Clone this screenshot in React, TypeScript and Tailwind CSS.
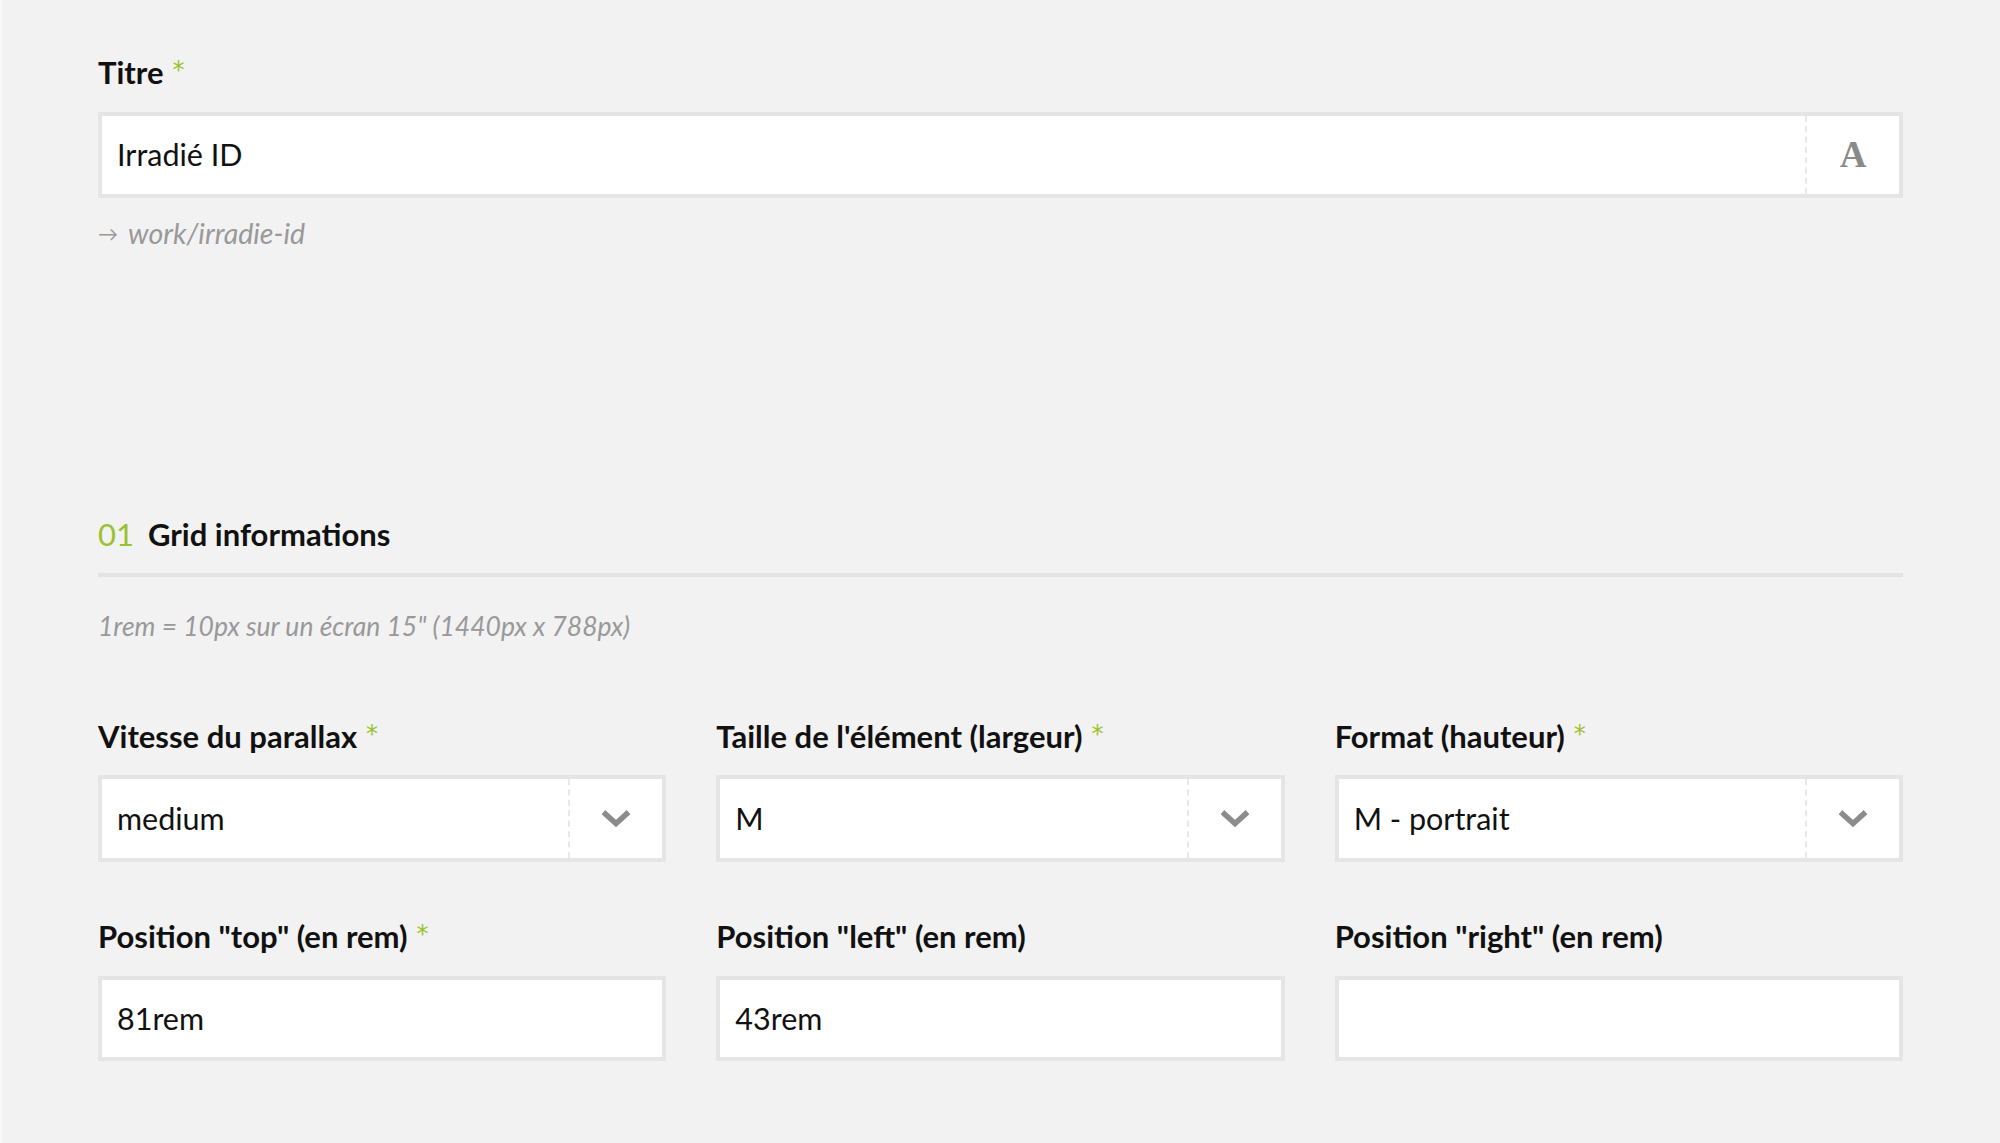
import { ReactNode } from 'react';

const FONT = "font-['Lato','Noto_Sans',sans-serif]";

// astérisque vert des champs obligatoires
function Required() {
  return (
    <span className="ml-[9px] self-start pt-[6px] font-['DejaVu_Sans',sans-serif] text-[24px] font-normal leading-none text-[#9bc12e]">
      *
    </span>
  );
}

function Label({ children, required }: { children: ReactNode; required?: boolean }) {
  return (
    <div className="flex h-[40px] items-center text-[31px] font-bold leading-[40px] text-[#111]">
      <span>{children}</span>
      {required && <Required />}
    </div>
  );
}

function Chevron() {
  return (
    <svg width="30" height="20" viewBox="0 0 30 20" fill="none">
      <polyline points="4.5,5 15,14.5 25.5,5" stroke="#8c8c8c" strokeWidth="5.5" strokeLinecap="square" />
    </svg>
  );
}

function Box({ children, addon, h }: { children?: ReactNode; addon?: ReactNode; h: string }) {
  return (
    <div className={'flex border-4 border-[#e5e5e5] bg-white ' + h}>
      <div className="flex flex-1 items-center pl-[15px] text-[30.5px] text-[#111]">{children}</div>
      {addon && (
        <div className="flex w-[94px] items-center justify-center border-l-2 border-dashed border-[#e8e8e8]">
          {addon}
        </div>
      )}
    </div>
  );
}

export default function App() {
  return (
    <div className={'min-h-[1143px] border-l-2 border-[#f8f8f8] bg-[#f2f2f2] pb-[80px] pl-[96px] pr-[97px] pt-[52px] ' + FONT}>
      {/* Titre */}
      <Label required>Titre</Label>
      <div className="mt-[20px]">
        <Box
          h="h-[86px]"
          addon={<span className="font-['Liberation_Serif',serif] text-[37px] font-bold text-[#8a8a8a]">A</span>}
        >
          Irradié ID
        </Box>
      </div>
      <div className="mt-[17px] flex h-[36px] items-center text-[28.5px] italic text-[#999]">
        <span className="mr-[10px] not-italic text-[20px] text-[#999]">→</span>
        work/irradie-id
      </div>

      {/* Section 01 */}
      <div className="mt-[263px] flex h-[40px] items-center text-[31px] leading-[40px]">
        <span className="font-normal text-[#9bc12e]">01</span>
        <span className="ml-[14px] font-bold text-[#111]">Grid informations</span>
      </div>
      <div className="mt-[19px] h-[4px] bg-[#e3e3e3]" />
      <div className="mt-[32px] flex h-[36px] items-center text-[26.5px] italic text-[#999]">
        1rem = 10px sur un écran 15" (1440px x 788px)
      </div>

      <div className="mt-[71px] grid grid-cols-3 gap-x-[50px]">
        <div>
          <Label required>Vitesse du parallax</Label>
          <div className="mt-[19px]">
            <Box h="h-[87px]" addon={<Chevron />}>medium</Box>
          </div>
        </div>
        <div>
          <Label required>Taille de l'élément (largeur)</Label>
          <div className="mt-[19px]">
            <Box h="h-[87px]" addon={<Chevron />}>M</Box>
          </div>
        </div>
        <div>
          <Label required>Format (hauteur)</Label>
          <div className="mt-[19px]">
            <Box h="h-[87px]" addon={<Chevron />}>M - portrait</Box>
          </div>
        </div>

        <div className="mt-[54px]">
          <Label required>Position "top" (en rem)</Label>
          <div className="mt-[20px]">
            <Box h="h-[85px]">81rem</Box>
          </div>
        </div>
        <div className="mt-[54px]">
          <Label>Position "left" (en rem)</Label>
          <div className="mt-[20px]">
            <Box h="h-[85px]">43rem</Box>
          </div>
        </div>
        <div className="mt-[54px]">
          <Label>Position "right" (en rem)</Label>
          <div className="mt-[20px]">
            <Box h="h-[85px]" />
          </div>
        </div>
      </div>
    </div>
  );
}
